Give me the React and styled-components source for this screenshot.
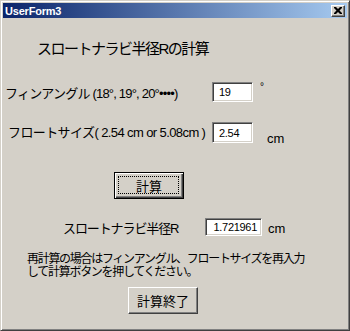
import React from "react";
import styled, { createGlobalStyle } from "styled-components";

const Global = createGlobalStyle`
  html, body { margin: 0; padding: 0; background: #d4d0c8; }
  * { box-sizing: border-box; }
`;

const FONT = `"Liberation Sans", "Noto Sans CJK JP", sans-serif`;

const Window = styled.div`
  width: 350px;
  height: 331px;
  background: #d4d0c8;
  border: 1px solid;
  border-color: #d4d0c8 #404040 #404040 #d4d0c8;
  box-shadow: inset 1px 1px #ffffff, inset -1px -1px #808080;
  padding: 2px;
  display: flex;
  flex-direction: column;
  font-family: ${FONT};
  color: #000;
`;

const TitleBar = styled.div`
  height: 15px;
  display: flex;
  align-items: center;
  justify-content: space-between;
  padding: 0 2px 0 2px;
  background: linear-gradient(to right, #0a246a, #a6caf0);
`;

const Title = styled.span`
  font-family: "Liberation Sans", sans-serif;
  font-weight: bold;
  font-size: 11px;
  color: #fff;
  letter-spacing: -0.2px;
`;

const CloseButton = styled.div`
  width: 14px;
  height: 12px;
  background: #d4d0c8;
  border: 1px solid;
  border-color: #ffffff #404040 #404040 #ffffff;
  box-shadow: inset -1px -1px #808080;
  display: flex;
  align-items: center;
  justify-content: center;
`;

const Body = styled.div`
  flex: 1;
  display: flex;
  flex-direction: column;
`;

const Heading = styled.div`
  margin-top: 22px;
  padding-left: 34px;
  font-size: 15px;
  line-height: 18px;
  letter-spacing: -1.5px;
`;

const Row = styled.div`
  margin-top: ${(p) => p.$top}px;
  padding-left: ${(p) => p.$left}px;
  height: ${(p) => p.$h}px;
  display: flex;
  align-items: center;
`;

const Label = styled.span`
  width: ${(p) => p.$w}px;
  font-size: 13px;
  letter-spacing: ${(p) => p.$ls ?? -0.6}px;
  white-space: nowrap;
  margin-top: ${(p) => p.$dy ?? 0}px;
`;

const Field = styled.div`
  width: ${(p) => p.$w}px;
  height: 100%;
  background: #fff;
  border: 1px solid;
  border-color: #808080 #ffffff #ffffff #808080;
  box-shadow: inset 1px 1px #404040, inset -1px -1px #d4d0c8;
  font-size: 11px;
  display: flex;
  align-items: center;
  justify-content: ${(p) => (p.$right ? "flex-end" : "flex-start")};
  padding: 0 4px 0 6px;
  letter-spacing: -0.3px;
`;

const Unit = styled.span`
  margin-left: ${(p) => p.$ml}px;
  font-size: ${(p) => p.$fs ?? 13}px;
  align-self: ${(p) => p.$self ?? "center"};
  margin-top: ${(p) => p.$dy ?? 0}px;
  line-height: 1;
`;

const ButtonWrap = styled.div`
  margin-top: ${(p) => p.$top}px;
  padding-left: ${(p) => p.$left}px;
  display: flex;
`;

const Button = styled.div`
  width: 70px;
  height: 27px;
  background: #d4d0c8;
  border: 1px solid;
  border-color: ${(p) => (p.$focus ? "#000" : "#fff #404040 #404040 #fff")};
  box-shadow: ${(p) =>
    p.$focus
      ? "inset 1px 1px #fff, inset -1px -1px #404040, inset -2px -2px #808080"
      : "inset -1px -1px #808080"};
  display: flex;
  align-items: center;
  justify-content: center;
  font-size: 13px;
  position: relative;
`;

const FocusRing = styled.div`
  position: absolute;
  inset: 3px 4px 4px 3px;
  border: 1px dotted #000;
`;

const Note = styled.div`
  margin-top: 17px;
  padding-left: 24px;
  font-size: 12px;
  line-height: 13px;
  letter-spacing: -1.3px;
`;

export default function App() {
  return (
    <>
      <Global />
      <Window>
        <TitleBar>
          <Title>UserForm3</Title>
          <CloseButton>
            <svg width="8" height="7" viewBox="0 0 8 7">
              <path d="M0 0h2l2 2 2-2h2v1l-2.5 2.5L8 6v1H6L4 5 2 7H0V6l2.5-2.5L0 1z" fill="#000" />
            </svg>
          </CloseButton>
        </TitleBar>
        <Body>
          <Heading>スロートナラビ半径Rの計算</Heading>
          <Row $top={24} $left={2} $h={20}>
            <Label $w={207} $ls={-0.8}>フィンアングル (18°, 19°, 20°••••)</Label>
            <Field $w={41}>19</Field>
            <Unit $ml={7} $fs={10} $self="flex-start" $dy={0}>°</Unit>
          </Row>
          <Row $top={20} $left={5} $h={21}>
            <Label $w={204} $ls={-0.6} $dy={-3}>フロートサイズ( 2.54 cm or 5.08cm )</Label>
            <Field $w={41}>2.54</Field>
            <Unit $ml={14} $dy={12}>cm</Unit>
          </Row>
          <ButtonWrap $top={29} $left={111}>
            <Button $focus>
              <FocusRing />
              計算
            </Button>
          </ButtonWrap>
          <Row $top={19} $left={60} $h={18}>
            <Label $w={142} $ls={-1.1}>スロートナラビ半径R</Label>
            <Field $w={57} $right>1.721961</Field>
            <Unit $ml={6} $dy={2}>cm</Unit>
          </Row>
          <Note>
            再計算の場合はフィンアングル、フロートサイズを再入力
            <br />
            して計算ボタンを押してください。
          </Note>
          <ButtonWrap $top={8} $left={125}>
            <Button>計算終了</Button>
          </ButtonWrap>
        </Body>
      </Window>
    </>
  );
}
